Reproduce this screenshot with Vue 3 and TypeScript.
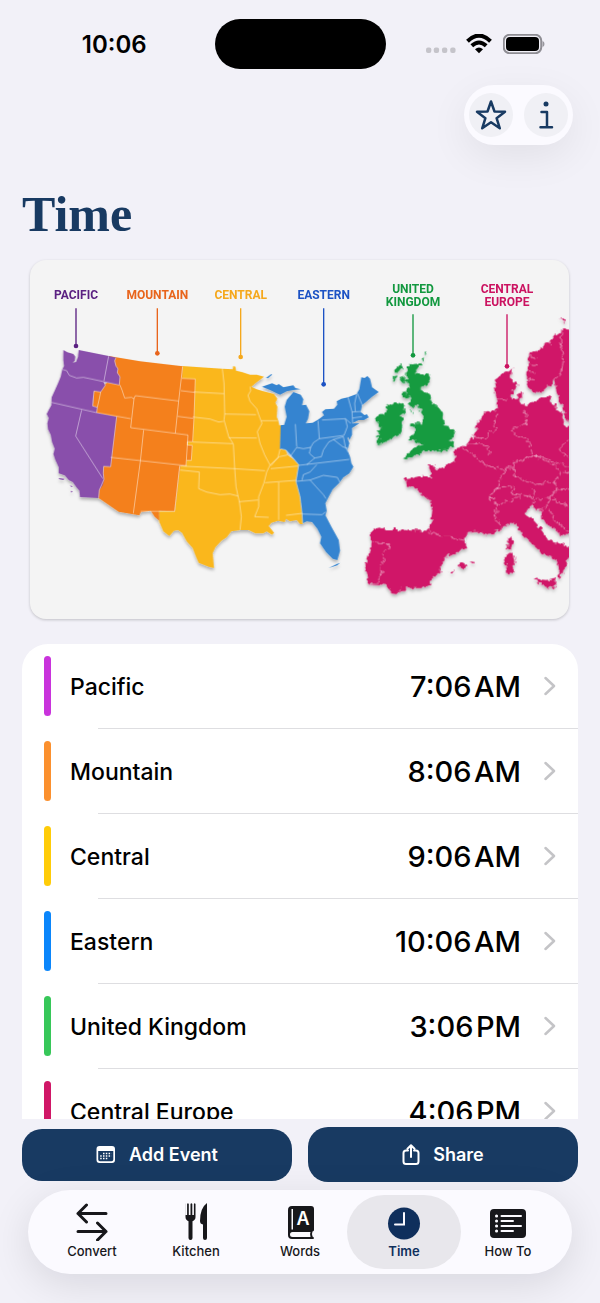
<script setup lang="ts">
interface Zone { name: string; time: string; half: string; tone: string }
interface Pin { lines: string[]; x: number; y: number; top: number; end: number; tone: string }

const zones: Zone[] = [
  { name: 'Pacific', time: '7:06', half: 'AM', tone: 'violet' },
  { name: 'Mountain', time: '8:06', half: 'AM', tone: 'orange' },
  { name: 'Central', time: '9:06', half: 'AM', tone: 'yellow' },
  { name: 'Eastern', time: '10:06', half: 'AM', tone: 'blue' },
  { name: 'United Kingdom', time: '3:06', half: 'PM', tone: 'green' },
  { name: 'Central Europe', time: '4:06', half: 'PM', tone: 'pink' },
]

const pins: Pin[] = [
  { lines: ['PACIFIC'], x: 138, y: 116, top: 145, end: 258, tone: '#5b2182' },
  { lines: ['MOUNTAIN'], x: 382, y: 116, top: 145, end: 280, tone: '#e8641b' },
  { lines: ['CENTRAL'], x: 632, y: 116, top: 145, end: 291, tone: '#f5a81c' },
  { lines: ['EASTERN'], x: 881, y: 116, top: 145, end: 373, tone: '#1c52c4' },
  { lines: ['UNITED', 'KINGDOM'], x: 1149, y: 98, top: 163, end: 286, tone: '#12983f' },
  { lines: ['CENTRAL', 'EUROPE'], x: 1431, y: 98, top: 163, end: 319, tone: '#cb1260' },
]
</script>

<template>
  <div class="screen">
    <header class="status">
      <span class="clock">10:06</span>
      <span class="island"></span>
      <span class="signals">
        <svg class="dots" viewBox="0 0 32 6" aria-hidden="true">
          <rect x="0" y="0.5" width="5.500" height="5.500" rx="2" /><rect x="8" y="0.5" width="5.500" height="5.500" rx="2" />
          <rect x="16.500" y="0.5" width="5.500" height="5.500" rx="2" /><rect x="25" y="0.5" width="5.500" height="5.500" rx="2" />
        </svg>
        <svg class="wifi" viewBox="0 0 26 20" aria-hidden="true">
          <path d="M1.500 7.200Q13-4 24.500 7.200" /><path d="M5.800 11.800Q13 5.200 20.200 11.800" />
          <path class="fill" d="M9 15.300Q13 11.800 17 15.300L13 19.200Z" />
        </svg>
        <svg class="battery" viewBox="0 0 42 20" aria-hidden="true">
          <rect class="shell" x="0.750" y="0.750" width="37.500" height="18.500" rx="6" />
          <rect x="3" y="3" width="33" height="14" rx="4" /><path class="cap" d="M39.500 7v6q2-.6 2-3t-2-3z" />
        </svg>
      </span>
    </header>

    <div class="toolbar">
      <div class="pill">
        <button type="button" aria-label="Favorites">
          <svg viewBox="0 0 32 32" aria-hidden="true"><path d="M16 2.500 19.500 12.500 30 12.800 21.600 19.200 24.800 29.300 16 23.200 7.200 29.300 10.400 19.200 2 12.800 12.500 12.500Z" /></svg>
        </button>
        <button type="button" aria-label="Information">
          <svg viewBox="0 0 32 32" aria-hidden="true"><circle cx="16" cy="5" r="2.500" /><path d="M11.500 13H17V28M10.500 28.200H22" /></svg>
        </button>
      </div>
    </div>

    <h1>Time</h1>

    <figure class="map">
      <svg viewBox="0 0 1617 1077" role="img" aria-label="Time zone map">
        <defs>
          <filter id="lift" x="-5%" y="-5%" width="110%" height="112%">
            <feDropShadow dx="0" dy="7" stdDeviation="5" flood-color="#000" flood-opacity=".28" />
          </filter>
          <filter id="coast" color-interpolation-filters="sRGB">
            <feTurbulence type="fractalNoise" baseFrequency=".07" numOctaves="2" seed="4" />
            <feDisplacementMap in="SourceGraphic" scale="20" xChannelSelector="R" yChannelSelector="G" />
          </filter>
        </defs>
        <g filter="url(#lift)">
          <g transform="translate(360 240)">
            <path fill="#fab71e" d="M74 514 90 380 96 78 150 82 217 86 248 88 250 78 256 80 258 92 275 96 300 104 320 104 342 110 318 128 304 140 320 148 340 154 372 162 382 176 376 188 382 200 380 230 384 240 388 256 402 258 402 272 392 274 390 328 406 328 412 344 430 358 446 374 438 420 450 470 457 520 458 552 450 552 440 540 420 544 408 536 404 546 384 542 364 548 356 558 372 578 366 584 350 574 340 580 316 580 296 570 270 570 244 574 230 592 214 602 196 622 188 640 192 684 176 680 146 668 138 650 128 624 110 604 96 578 84 570 72 572 58 588 40 574 28 546 26 514Z" />
          </g>
          <path fill="#f4801c" d="M236 288 330 304 400 312 458 319 456 355 496 357 492 475 488 545 474 545 472 555 487 556 484 601 470 601 468 617 451 617 449 632 434 754 387 752 388 782 374 770 362 752 332 757 328 766 266 755 206 714 200 458 188 438 192 393 230 370Z" />
          <path fill="#8950ab" d="M100 270 112 277 130 282 136 290 134 302 128 308 138 306 144 290 146 270 236 288 258 293 254 302 258 318 264 326 262 338 270 350 268 375 222 366 226 376 218 388 212 396 192 393 188 438 202 442 200 458 260 470 242 620 221 619 220 640 222 658 218 675 208 690 206 714 150 711 148 692 138 680 128 666 116 660 104 646 86 640 86 622 76 600 70 582 74 566 66 546 62 524 54 508 52 490 56 474 50 462 56 450 64 436 65 412 74 392 84 370 92 350 97 328 102 318 100 300ZM86 654 104 656 100 660 88 658ZM120 674 128 680 124 682ZM122 692 128 694 124 698Z" />
          <g transform="translate(690 240)">
            <path fill="#3484d0" d="M6 140 36 130 50 136 56 132 70 142 100 136 106 144 122 148 100 150 80 154 60 164 50 160 30 150ZM18 114 34 102 36 104 24 115ZM92 166 100 156 122 164 130 178 126 196 138 194 148 214 144 236 136 252 72 256 80 230 74 200 80 180ZM62 256 106 250 140 250 158 248 176 238 192 226 186 216 196 208 222 206 232 194 230 184 244 176 264 172 290 162 298 148 304 112 314 114 322 108 330 116 336 142 356 156 336 170 322 182 306 196 302 216 314 226 320 222 326 232 312 240 296 240 276 250 298 250 276 264 276 284 268 300 264 290 262 294 268 310 262 330 270 350 274 370 280 380 268 400 250 412 238 428 218 448 206 470 196 490 200 512 196 526 214 560 236 600 240 632 232 660 218 656 198 636 180 610 184 590 172 566 156 546 140 544 128 550 126 520 120 470 108 425 116 374 96 350 78 330 60 326ZM206 684 230 672 240 668 232 676Z" />
          </g>
          <g filter="url(#coast)">
            <path transform="translate(960 30)" fill="#159b40" d="M176 282 190 284 214 276 216 282 206 294 194 308 208 312 240 314 240 326 228 346 210 358 222 364 232 368 246 384 252 404 266 416 276 432 274 446 284 452 280 466 296 468 312 476 316 488 308 504 296 512 312 518 310 530 290 540 262 542 244 544 226 544 212 554 196 552 186 562 168 568 156 566 176 552 188 534 204 530 224 520 200 518 190 508 172 508 176 500 192 492 194 478 182 466 196 458 216 458 218 440 212 424 206 410 190 408 178 410 176 396 186 380 176 372 168 366 180 350 170 340 162 332 172 326 168 310 176 298ZM138 292 156 282 154 294 144 306 136 304ZM130 314 140 320 134 334ZM150 324 168 318 162 334 148 328ZM158 370 172 366 180 380 168 386 160 378ZM182 430 190 422 186 432ZM214 266 222 258 220 270ZM222 252 232 246 228 256ZM114 404 128 408 136 396 156 402 166 412 166 424 152 434 158 448 156 470 154 490 138 498 120 508 96 520 84 522 76 514 90 504 76 500 90 492 80 482 96 470 84 462 78 448 80 438 104 434 110 424 104 412Z" />
            <g transform="translate(960 540)">
              <path fill="#d01767" d="M166 114 188 112 212 106 222 112 244 112 236 72 252 76 254 84 280 84 290 72 316 62 316 28 352 12 368 -6 376 -22 382 -54 396 -70 412 -90 436 -88 444 -98 440 -124 434 -160 440 -190 462 -198 486 -214 482 -190 486 -178 502 -178 500 -160 488 -148 484 -130 486 -122 512 -124 510 -112 530 -104 560 -120 600 -134 604 -116 622 -92 636 -84 638 -62 648 -42 675 -40 675 290 630 282 600 260 590 246 574 234 572 212 562 206 556 214 552 198 530 204 528 222 548 238 572 264 590 292 610 306 634 314 675 326 675 350 657 356 644 362 650 380 640 396 630 416 624 410 632 396 626 376 614 358 590 346 560 322 528 296 510 272 500 254 482 248 464 262 452 268 430 280 412 286 396 276 372 276 350 280 342 296 346 320 330 334 290 348 268 384 274 396 256 408 240 432 218 444 180 444 152 448 140 462 124 460 112 436 84 432 50 430 52 396 42 386 54 352 64 304 58 280 70 268 90 262 104 268 140 268 184 272 236 272 244 240 248 200 230 172 204 154 190 140 170 134ZM500 -134 516 -144 516 -128 504 -122ZM472 300 486 288 490 310 484 332 470 328ZM460 348 490 338 496 362 490 396 472 400 466 370ZM552 416 590 420 618 412 612 448 586 440 556 424ZM322 376 344 366 352 378 340 386ZM298 396 310 390 306 400ZM362 364 374 366 370 370Z" />
              <path fill="#d01767" d="M630 -360 650 -364 648 -354 640 -356ZM675 -340 634 -330 612 -314 600 -294 584 -286 564 -270 538 -258 532 -240 534 -214 530 -180 532 -160 550 -144 580 -146 606 -170 611 -184 616 -162 624 -130 636 -100 646 -66 657 -54 675 -52Z" />
              <path class="borders" d="M238 276 276 290 300 290 346 302M62 304 76 310 116 312 112 326 98 336 102 362 90 380 96 396 86 430M336 16 346 32 366 40 390 62 412 76 452 88 472 84 460 100 448 122 446 144 432 150 418 182M352 12 380 8 410 14 418 34 414 50M370 -10 390 -6 416 -8 418 -24 436 -30 432 -56 440 -76M418 182 428 172 438 190 454 192 470 182 478 188 496 172 512 172M438 144 472 138 494 150 486 160 512 164 548 172 552 158 546 146M472 84 492 86 494 110 532 122 556 134 612 124 636 106 616 76 550 46 516 60 486 66 492 86M550 46 546 20 526 -2 496 -16 484 -30 510 -44 530 -50 524 -90M612 124 616 148 602 174 552 180 552 202M616 148 657 146M602 174 630 190 657 196M598 210 614 240 657 276M438 190 440 220 434 240 450 250 452 268M640 96 657 100M550 46 600 60 657 80M655 0 632 20 632 34 657 52M566 206 584 210 602 176M440 -124 474 -118M532 -206 556 -200M532 -228 560 -222M530 -186 554 -180M538 -256 560 -244M636 -330 632 -296 640 -240 634 -200 612 -180M600 -294 610 -286" />
            </g>
          </g>
        </g>

        <g class="borders">
          <path d="M236 288 222 362M97 328 110 332 118 346 140 354 160 352 180 356 268 375M64 427 200 458 302 476M155 450 137 528 218 655M192 393 188 438 202 442M212 396 208 416 202 442 200 458M222 366 226 376 212 396 192 393M258 293 254 302 258 318 264 326 262 338 270 350 268 375M260 470 242 620 221 619 220 640 222 658 208 690 206 714" />
          <path d="M270 375 276 390 284 414 304 412 312 416 316 407 446 423M458 319 446 423 436 520M453 392 494 397M443 469 490 475M312 416 302 503 436 520 474 525 468 617M341 510 331 604 310 760M242 592 470 617M449 618 434 754 332 754M456 355 496 357 492 475 488 545 472 545 472 555 487 556 484 601 470 601" />
          <path transform="translate(360 240)" d="M132 156 222 161M128 231 180 237 206 246 220 244M217 86 222 130 224 222 222 240 236 290 250 312 254 386 258 440 264 468 268 485 274 530 270 570M128 306 248 311M90 378 254 386 345 392M90 390 148 396 146 446 170 456 210 464 240 462 264 468M224 222 318 224M236 293 320 294M300 140 302 152 294 166 300 184 320 206 326 224 336 250 322 275 330 310 344 345 360 375 350 396 342 428 326 470 326 500 314 530 356 532M334 242 382 242M390 328 384 352 362 378M360 375 388 350 412 345M362 386 444 378M345 428 438 421M386 427 386 540M268 485 324 480M408 526 456 520" />
          <path transform="translate(690 240)" d="M62 326 78 330 96 350 116 374 108 425 120 470 126 520 128 550M106 252 110 320M90 350 110 322 130 326 152 322 160 308 178 296 174 242M186 240 256 236 262 260 252 286 178 296M256 236 272 250M152 322 148 340 164 354 184 350 190 330 206 306 222 298 250 290M220 298 248 320 264 326M164 354 140 374M116 376 268 358M170 374 150 396 130 404 126 420M108 424 150 420 190 406 232 412 240 428M150 420 168 440 190 464 198 476M126 522 186 524 196 516M264 172 276 215 278 250M290 162 284 190 286 214M292 160 308 198M276 216 306 214M278 234 306 230M250 290 256 320 264 336" />
        </g>

        <g v-for="pin in pins" :key="pin.lines.join(' ')" :fill="pin.tone" :stroke="pin.tone" class="pin">
          <text v-for="(line, i) in pin.lines" :key="line" :x="pin.x" :y="pin.y + i * 41">{{ line }}</text>
          <path :d="`M${pin.x} ${pin.top}V${pin.end}`" />
          <circle :cx="pin.x" :cy="pin.end" r="7" />
        </g>
      </svg>
    </figure>

    <ul class="zones">
      <li v-for="zone in zones" :key="zone.name">
        <a href="#">
          <i :class="['bar', zone.tone]"></i>
          <span class="name">{{ zone.name }}</span>
          <span class="time">{{ zone.time }}&#8202;{{ zone.half }}</span>
          <svg class="chevron" viewBox="0 0 12 20" aria-hidden="true"><path d="M1.500 2 10 10 1.500 18" /></svg>
        </a>
      </li>
    </ul>

    <div class="actions">
      <button type="button">
        <svg viewBox="0 0 20 18" class="calendar" aria-hidden="true">
          <path fill="#fff" fill-rule="evenodd" d="M3.500 0h12.500Q19 0 19 3v11q0 3-3 3H3.500Q.5 17 .5 14V3q0-3 3-3ZM2.200 5v8.500q0 1.800 1.800 1.800h11.500q1.800 0 1.800-1.800V5Z" />
          <path stroke="#fff" stroke-width="1.500" stroke-dasharray="1.500 1.300" d="M7 7.500h8.500M4.200 10h11.300M4.200 12.600h8" />
        </svg>
        Add Event
      </button>
      <button type="button" class="tall">
        <svg viewBox="0 0 18 22" class="share" aria-hidden="true">
          <path d="M6 6.500H4Q1.500 6.500 1.500 9v8.500Q1.500 20 4 20h10q2.500 0 2.500-2.500V9q0-2.500-2.500-2.500H12M9 13V1.500M5.500 4.800 9 1.300l3.500 3.500" />
        </svg>
        Share
      </button>
    </div>

    <nav class="tabs">
      <a href="#">
        <svg viewBox="0 0 40 40" aria-hidden="true"><path class="line" d="M34 12.500H6M14.500 4 6 12.500 14.500 21M6 30.500H34M25.500 22 34 30.500 25.500 39" /></svg>
        Convert
      </a>
      <a href="#">
        <svg viewBox="0 0 40 40" aria-hidden="true"><path d="M9.500 3v13q0 3 3 4.200V37q0 2 2 2t2-2V20.200q3-1.200 3-4.200V3q-.8-1.500-1.600 0V14h-1.600V3q-.9-1.500-1.800 0V14h-1.700V3q-.9-1.500-1.700 0V14h-1.500V3Q10.300 1.500 9.500 3ZM31 2Q24 7 24 20q0 3 3 3.500V37q0 2 2 2t2-2Z" /></svg>
        Kitchen
      </a>
      <a href="#">
        <svg viewBox="0 0 40 40" aria-hidden="true">
          <path fill-rule="evenodd" d="M12 5H31Q34 5 34 8V29Q34 30 32.500 30.500Q31.500 33 32.500 35.500Q34 36 34 37.500L33 38H12Q8 38 8 34V9Q8 5 12 5ZM11.500 8V28.500H13V8ZM12.500 31Q10 31 10 33.500T12.500 36H30.500Q29.500 33 30.500 31Z" />
          <text x="23" y="24">A</text>
        </svg>
        Words
      </a>
      <a href="#" class="active" aria-current="page">
        <svg viewBox="0 0 40 40" aria-hidden="true"><circle cx="20" cy="22.500" r="16" /><path class="hands" d="M20 12V23.500H11" /></svg>
        Time
      </a>
      <a href="#">
        <svg viewBox="0 0 40 40" aria-hidden="true">
          <rect x="2" y="8" width="36" height="29" rx="4" />
          <path class="rows" d="M13.500 15H33M13.500 20H25M13.500 25H33M13.500 30H25" /><path class="rows dot" d="M8.500 15h.1M8.500 20h.1M8.500 25h.1M8.500 30h.1" />
        </svg>
        How To
      </a>
    </nav>
  </div>
</template>

<style>
body { margin: 0; background: #f2f1f8; }
</style>

<style scoped>
* { box-sizing: border-box; }
.screen {
  background: #f2f1f8;
  color: #000;
  font-family: Inter, "Liberation Sans", sans-serif;
  height: 100vh;
  display: flex;
  flex-direction: column;
  overflow: hidden;
}
svg { display: block; }
.status {
  flex: none;
  height: 85px;
  padding-top: 3px;
  display: grid;
  grid-template-columns: 1fr 171px 1fr;
  align-items: center;
}
.clock { justify-self: center; padding-left: 14px; font-size: 24px; font-weight: 600; }
.island { height: 50px; border-radius: 25px; background: #000; }
.signals { display: flex; align-items: center; padding-left: 40px; }
.dots { width: 31px; height: 6px; margin: 12px 9px 0 0; fill: #c5c4ca; }
.wifi { width: 26px; height: 20px; fill: none; stroke: #000; stroke-width: 4; }
.wifi .fill { fill: #000; stroke: none; }
.battery { width: 42px; height: 20px; margin-left: 11px; }
.battery .shell { fill: none; stroke: #8e8d93; stroke-width: 2; }
.battery .cap { fill: #98979d; }
.toolbar { flex: none; display: flex; justify-content: flex-end; padding-right: 27px; }
.pill {
  display: flex;
  gap: 11px;
  padding: 8px 5px;
  border-radius: 30px;
  background: #fbfaff;
  box-shadow: 0 12px 40px rgba(0, 0, 20, .07);
}
.pill button { width: 44px; height: 44px; padding: 6px; border: 0; border-radius: 50%; background: #f0f0f5; }
.pill svg { width: 32px; height: 32px; fill: none; stroke: #183a62; stroke-width: 2.5; stroke-linejoin: round; stroke-linecap: round; }
.pill circle { fill: #183a62; stroke: none; }
h1 {
  flex: none;
  margin: 41px 22px 0;
  font: bold 50px/56px "Liberation Serif", serif;
  color: #183a62;
}
.map {
  flex: none;
  margin: 18px 31px 0 30px;
  border-radius: 16px;
  overflow: hidden;
  background: #f4f4f4;
  box-shadow: 0 1px 3px rgba(0, 0, 0, .2);
}
.map svg { width: 100%; }
.borders { fill: none; stroke: #fff; stroke-opacity: .7; stroke-width: 2; stroke-linejoin: round; }
.pin text { font: bold 36px Roboto, "Liberation Sans", sans-serif; text-anchor: middle; stroke: none; }
.pin path { stroke-width: 4; }
.pin circle { stroke: none; }
.zones {
  flex: 1;
  min-height: 0;
  margin: 25px 22px 0;
  padding: 0;
  list-style: none;
  overflow: hidden;
  background: #fff;
  border-radius: 26px 26px 0 0;
}
.zones li { height: 85px; position: relative; }
.zones li + li::before { content: ""; position: absolute; top: -1px; left: 76px; right: 0; height: 1px; background: #dedee1; }
.zones a { height: 84px; display: flex; align-items: center; padding: 0 22px; color: #000; text-decoration: none; }
.bar { width: 7px; height: 60px; border-radius: 4px; margin-right: 19px; }
.violet { background: #c933dc; }
.orange { background: #fb902e; }
.yellow { background: #ffcc08; }
.blue { background: #0b86fb; }
.green { background: #37c759; }
.pink { background: #d01767; }
.name { flex: 1; font-size: 23px; font-weight: 500; padding-top: 1px; }
.time { font-size: 29px; font-weight: 450; padding-top: 1px; }
.chevron { width: 12px; height: 20px; margin-left: 23px; fill: none; stroke: #c4c4c7; stroke-width: 2.5; stroke-linecap: round; stroke-linejoin: round; }
.actions { flex: none; display: flex; align-items: center; gap: 16px; padding: 8px 22px; }
.actions button {
  flex: 1;
  height: 52px;
  display: flex;
  align-items: center;
  justify-content: center;
  gap: 13px;
  border: 0;
  border-radius: 20px;
  background: #183a62;
  color: #fff;
  font: 600 18px/24px Inter, sans-serif;
}
.actions .tall { height: 55px; }
.calendar { width: 20px; height: 18px; fill: none; }
.share { width: 18px; height: 22px; fill: none; stroke: #fff; stroke-width: 2; stroke-linecap: round; stroke-linejoin: round; }
.tabs {
  flex: none;
  display: grid;
  grid-template-columns: repeat(5, 1fr);
  margin: 0 28px 29px;
  padding: 5px 12px;
  height: 84px;
  border-radius: 42px;
  background: #fbfaff;
  box-shadow: 0 10px 40px rgba(0, 0, 20, .11);
}
.tabs a {
  display: flex;
  flex-direction: column;
  align-items: center;
  gap: 1px;
  margin: 0 -5px;
  padding-top: 6px;
  border-radius: 37px;
  color: #17171b;
  text-decoration: none;
  font-size: 13px;
  line-height: 18px;
  font-weight: 500;
}
.tabs svg { width: 40px; height: 40px; fill: currentColor; }
.tabs a.active { background: #e8e7ec; color: #0f2f5c; font-weight: 600; }
.line { fill: none; stroke: currentColor; stroke-width: 3; stroke-linecap: round; stroke-linejoin: round; }
.hands, .rows { fill: none; stroke: #fbfaff; stroke-width: 2; stroke-linecap: round; }
.rows.dot { stroke-width: 3; }
.tabs text { font: 600 18px Inter, sans-serif; fill: #fff; text-anchor: middle; }
</style>
